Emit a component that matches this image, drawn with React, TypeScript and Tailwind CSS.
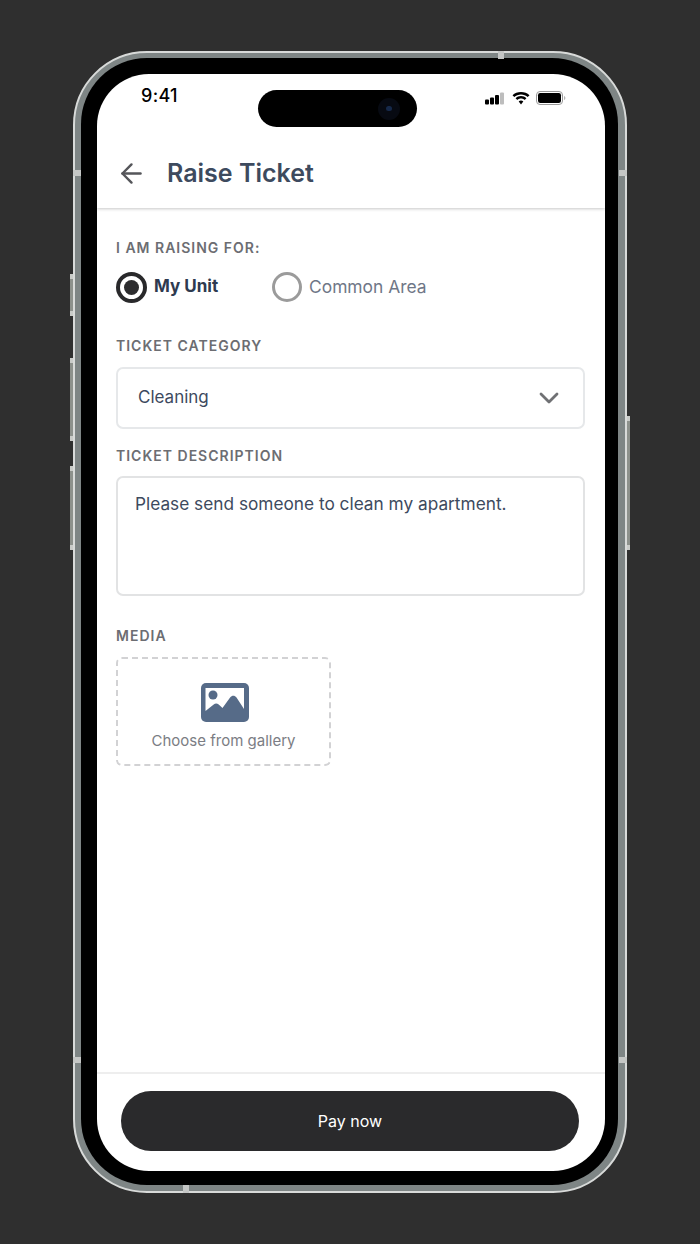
import { ArrowLeft, ChevronDown } from "lucide-react";

const labelClass = "text-[14px] leading-[20px] font-semibold tracking-[1px] text-[#6c6d72] uppercase";

// hardware bits sitting on the edge of the phone body
function SideButton({ className }: { className: string }) {
    return (
        <div className={`absolute w-[3px] bg-[#8d918c] ${className}`}>
            <div className="absolute top-0 left-0 h-[5px] w-full bg-[#c9cbc8]" />
            <div className="absolute bottom-0 left-0 h-[5px] w-full bg-[#c9cbc8]" />
        </div>
    );
}

function StatusIcons() {
    return (
        <div className="flex items-center">
            <svg width="20" height="13" viewBox="0 0 20 13">
                <rect x="0" y="7.500" width="4" height="5" rx="1" fill="#000" />
                <rect x="5" y="5.500" width="4" height="7" rx="1" fill="#000" />
                <rect x="10" y="3" width="4" height="9.500" rx="1" fill="#000" />
                <rect x="15" y="0.500" width="4" height="12" rx="1" fill="#bdbdbd" />
            </svg>
            <svg width="18" height="13" viewBox="0 0 18 13" className="ml-[7px]">
                <path d="M9 2.400c2.600 0 5 1 6.700 2.700L17.500 3.300C15.300 1.100 12.300 0 9 0S2.700 1.100.5 3.300l1.800 1.800C4 3.400 6.400 2.400 9 2.400z" fill="#000" />
                <path d="M9 6.500c1.400 0 2.700.5 3.700 1.500l1.700-1.700C13 4.900 11.100 4.100 9 4.100s-4 .8-5.400 2.200L5.300 8c1-1 2.300-1.500 3.700-1.500z" fill="#000" />
                <path d="M9 8.500c-.9 0-1.700.4-2.300.9L9 12.500l2.300-3.100c-.6-.5-1.400-.9-2.300-.9z" fill="#000" />
            </svg>
            <svg width="30" height="14" viewBox="0 0 30 14" className="ml-[6px]">
                <rect x="0.500" y="0.500" width="26" height="13" rx="3.500" fill="none" stroke="#9a9a9a" />
                <rect x="2" y="2" width="23" height="10" rx="2.200" fill="#000" />
                <path d="M28 5v4c.8-.3 1.400-1.100 1.400-2S28.800 5.300 28 5z" fill="#b5b5b5" />
            </svg>
        </div>
    );
}

function GalleryIcon() {
    return (
        <svg width="48" height="39" viewBox="0 0 48 39" className="ml-[2px]">
            <rect width="48" height="39" rx="5" fill="#566b88" />
            <path d="M4.500 5H43v21l-7.500-11.500c-1.800-2.300-4.600-2.300-6.400 0L21.500 25l-3.800-3.500c-1.600-1.300-3.500-1.300-5 0L4.500 28z" fill="#fff" />
            <circle cx="12" cy="12" r="4.500" fill="#566b88" />
        </svg>
    );
}

export default function App() {
    return (
        <div className="h-[1244px] w-[700px] bg-[#2f2f2f] flex items-center justify-center font-['Inter',sans-serif]">
            <div className="relative w-[554px] h-[1142px] rounded-[74px] border-[2px] border-[#d8dad9] bg-[#7e8585] pl-[6px] pr-[7px] pt-[5px] pb-[6px]">
                {/* Antenna bands */}
                <div className="absolute left-[-2px] top-[117px] h-[6px] w-[8px] bg-[#c4c6c5]" />
                <div className="absolute right-[-2px] top-[117px] h-[6px] w-[8px] bg-[#c4c6c5]" />
                <div className="absolute left-[-2px] top-[1004px] h-[6px] w-[8px] bg-[#c4c6c5]" />
                <div className="absolute right-[-2px] top-[1004px] h-[6px] w-[8px] bg-[#c4c6c5]" />
                <div className="absolute left-[423px] top-[-2px] h-[8px] w-[6px] bg-[#c4c6c5]" />
                <div className="absolute left-[108px] bottom-[-2px] h-[8px] w-[6px] bg-[#c4c6c5]" />

                {/* Side buttons */}
                <SideButton className="left-[-5px] top-[221px] h-[42px]" />
                <SideButton className="left-[-5px] top-[305px] h-[83px]" />
                <SideButton className="left-[-5px] top-[413px] h-[84px]" />
                <SideButton className="right-[-5px] top-[363px] h-[134px]" />

                <div className="h-full rounded-[66px] bg-black pl-[16px] pr-[13px] pt-[16px] pb-[14px]">
                    <div className="relative h-full rounded-[52px] bg-white overflow-hidden flex flex-col">
                        {/* Dynamic island */}
                        <div className="absolute left-[161px] top-[16px] h-[37px] w-[159px] rounded-full bg-black flex items-center justify-end pr-[17px]">
                            <div className="h-[22px] w-[22px] rounded-full bg-[#070a12] flex items-center justify-center">
                                <div className="h-[5px] w-[6px] rounded-full bg-[#16294a]" />
                            </div>
                        </div>

                        {/* Status bar + header */}
                        <div className="h-[134px] shrink-0 shadow-[0_1px_3px_rgba(0,0,0,0.22)] relative">
                            <div className="flex items-start justify-between pl-[44px] pr-[39px] pt-[12px]">
                                <span className="text-[18px] leading-[20px] font-medium tracking-[0.3px] text-black">9:41</span>
                                <div className="pt-[5px]">
                                    <StatusIcons />
                                </div>
                            </div>
                            <div className="flex items-center gap-[20px] pl-[19px] pt-[51px]">
                                <ArrowLeft size={31} strokeWidth={1.9} className="text-[#55565a]" />
                                <h1 className="text-[25px] leading-[32px] font-semibold text-[#3d4a5e]">Raise Ticket</h1>
                            </div>
                        </div>

                        {/* Form */}
                        <div className="flex-1 pl-[19px] pr-[20px] pt-[30px] flex flex-col">
                            <div className={labelClass}>I am raising for:</div>
                            <div className="mt-[13px] flex items-center h-[32px]">
                                <div className="h-[31px] w-[31px] rounded-full border-[4px] border-[#29292b] flex items-center justify-center">
                                    <div className="h-[15px] w-[15px] rounded-full bg-[#2c2c2e]" />
                                </div>
                                <span className="ml-[7px] w-[118px] text-[17px] font-bold text-[#2e3a50]">My Unit</span>
                                <div className="h-[30px] w-[30px] rounded-full border-[3px] border-[#9b9b9b]" />
                                <span className="ml-[7px] text-[17.4px] text-[#6f7787]">Common Area</span>
                            </div>

                            <div className={`${labelClass} mt-[33px]`}>Ticket Category</div>
                            <div className="mt-[11px] h-[62px] rounded-[7px] border-[2px] border-[#e6e8ea] flex items-center justify-between pl-[20px] pr-[18px]">
                                <span className="pb-[1px] text-[17px] text-[#3d4a5e]">Cleaning</span>
                                <ChevronDown size={32} strokeWidth={2.1} className="text-[#707174]" />
                            </div>

                            <div className={`${labelClass} mt-[17px]`}>Ticket Description</div>
                            <div className="mt-[10px] h-[120px] rounded-[7px] border-[2px] border-[#e2e3e4] pl-[17px] pt-[12px] text-[17.25px] leading-[28px] text-[#3d4a5e]">
                                Please send someone to clean my apartment.
                            </div>

                            <div className={`${labelClass} mt-[30px]`}>Media</div>
                            <div className="mt-[11px] h-[109px] w-[215px] rounded-[6px] border-[2px] border-dashed border-[#d2d2d4] flex flex-col items-center pt-[24px]">
                                <GalleryIcon />
                                <span className="mt-[9px] text-[15px] leading-[20px] text-[#7b7d84]">Choose from gallery</span>
                            </div>
                        </div>

                        {/* Footer */}
                        <div className="shrink-0 border-t-[2px] border-[#eeeeee] h-[99px] pl-[24px] pr-[26px] pt-[17px]">
                            <button className="h-[60px] w-full rounded-full bg-[#2a2a2c] text-[16px] text-white">Pay now</button>
                        </div>
                    </div>
                </div>
            </div>
        </div>
    );
}
